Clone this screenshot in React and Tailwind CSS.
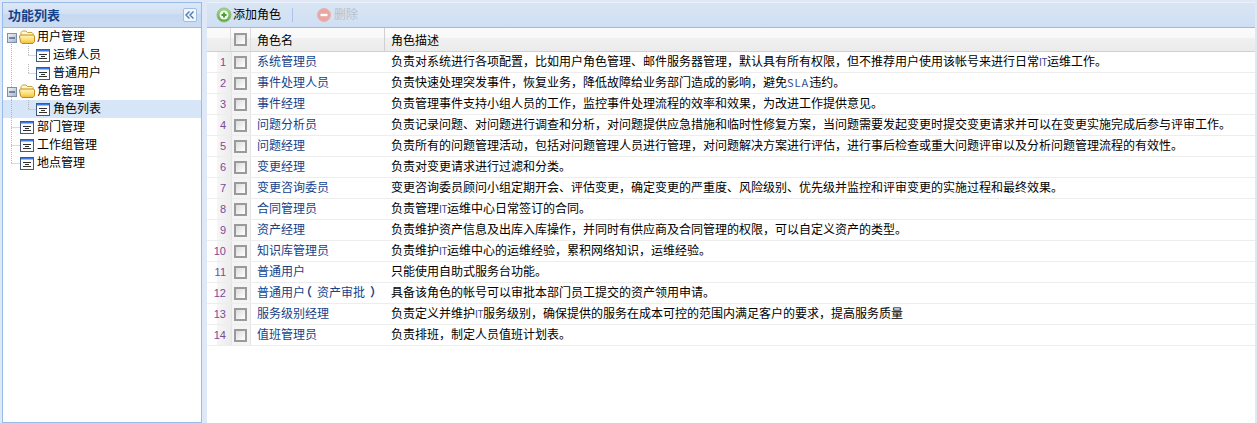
import React from 'react';

const roles = [
  ['系统管理员', '负责对系统进行各项配置，比如用户角色管理、邮件服务器管理，默认具有所有权限，但不推荐用户使用该帐号来进行日常IT运维工作。'],
  ['事件处理人员', '负责快速处理突发事件，恢复业务，降低故障给业务部门造成的影响，避免SLA违约。'],
  ['事件经理', '负责管理事件支持小组人员的工作，监控事件处理流程的效率和效果，为改进工作提供意见。'],
  ['问题分析员', '负责记录问题、对问题进行调查和分析，对问题提供应急措施和临时性修复方案，当问题需要发起变更时提交变更请求并可以在变更实施完成后参与评审工作。'],
  ['问题经理', '负责所有的问题管理活动，包括对问题管理人员进行管理，对问题解决方案进行评估，进行事后检查或重大问题评审以及分析问题管理流程的有效性。'],
  ['变更经理', '负责对变更请求进行过滤和分类。'],
  ['变更咨询委员', '变更咨询委员顾问小组定期开会、评估变更，确定变更的严重度、风险级别、优先级并监控和评审变更的实施过程和最终效果。'],
  ['合同管理员', '负责管理IT运维中心日常签订的合同。'],
  ['资产经理', '负责维护资产信息及出库入库操作，并同时有供应商及合同管理的权限，可以自定义资产的类型。'],
  ['知识库管理员', '负责维护IT运维中心的运维经验，累积网络知识，运维经验。'],
  ['普通用户', '只能使用自助式服务台功能。'],
  ['普通用户（资产审批）', '具备该角色的帐号可以审批本部门员工提交的资产领用申请。'],
  ['服务级别经理', '负责定义并维护IT服务级别，确保提供的服务在成本可控的范围内满足客户的要求，提高服务质量'],
  ['值班管理员', '负责排班，制定人员值班计划表。'],
];

function Dots({ d }) {
  return <path d={d} fill="none" stroke="#b4b4b4" strokeWidth="1" strokeDasharray="1 1" />;
}

function FolderIcon() {
  return (
    <svg width="16" height="14" viewBox="0 0 16 14" className="shrink-0">
      <defs>
        <linearGradient id="fold" x1="0" y1="0" x2="0" y2="1">
          <stop offset="0" stopColor="#fff6bd" />
          <stop offset="0.6" stopColor="#fbdd6e" />
          <stop offset="1" stopColor="#efb93a" />
        </linearGradient>
      </defs>
      <path d="M2 5V2.5L3.5 1H7L8.5 2.5H13L14 3.5V6" fill="#fff8d0" stroke="#c9a33a" />
      <path d="M1.5 5H14.5L15.5 6V11.5L14 13.5H3L1.5 12L0.5 6Z" fill="url(#fold)" stroke="#c08a1e" />
    </svg>
  );
}

function LeafIcon() {
  return (
    <svg width="14" height="13" viewBox="0 0 14 13" className="shrink-0">
      <rect x="0.5" y="0.5" width="13" height="12" fill="#fbfcfe" stroke="#45597c" />
      <rect x="1" y="1" width="12" height="1" fill="#3f78e0" />
      <rect x="1" y="2" width="12" height="1" fill="#9dbdf0" />
      <path d="M3 5.5H11M5 7.5H9M3 9.5H11" stroke="#2e2e2e" />
    </svg>
  );
}

function Expander() {
  return (
    <svg width="10" height="10" viewBox="0 0 10 10" className="absolute left-[4px] top-[5px]">
      <defs>
        <linearGradient id="exp" x1="0" y1="0" x2="1" y2="1">
          <stop offset="0" stopColor="#f4f7fb" />
          <stop offset="1" stopColor="#9fb3cf" />
        </linearGradient>
      </defs>
      <rect x="0.5" y="0.5" width="9" height="9" fill="url(#exp)" stroke="#7f8fa8" />
      <path d="M2 5H8" stroke="#1e3050" strokeWidth="1" />
    </svg>
  );
}

// one tree row, the dotted guides are drawn under the icons
function TreeRow({ label, type, child, selected, guide }) {
  return (
    <div className={`relative flex h-[18px] items-center ${selected ? 'bg-[#d6e5f8]' : ''}`}>
      <svg width="40" height="18" className="absolute left-0 top-0">
        {guide && <Dots d={guide} />}
      </svg>
      {type === 'folder' && <Expander />}
      <div className={child ? 'relative ml-[33px] flex items-center' : type === 'folder' ? 'relative ml-[16px] flex items-center' : 'relative ml-[17px] flex items-center'}>
        {type === 'folder' ? <FolderIcon /> : <LeafIcon />}
        <span className={type === 'folder' ? '-mt-[2px] ml-[2px] text-black' : '-mt-[2px] ml-[3px] text-black'}>{label}</span>
      </div>
    </div>
  );
}

function Description({ text }) {
  // latin runs are narrower in the reference's bitmap font
  return text.split(/(IT|SLA)/).map((p, i) => {
    if (p === 'IT') return <span key={i} className="text-[10px] tracking-[-0.5px] text-[#3a4a8a]">{p}</span>;
    if (p === 'SLA') return <span key={i} className="text-[11px] tracking-[1px] text-[#3a4a8a]">{p}</span>;
    return <span key={i}>{p}</span>;
  });
}

function RoleName({ name }) {
  // half width brackets with the rest of the cell as margin, the brackets sit away from the text
  return name.split(/([（）])/).map((p, i) => {
    if (p === '（') return <span key={i} className='ml-[1px] mr-[5px] font-bold [font-feature-settings:"halt"]'>{p}</span>;
    if (p === '）') return <span key={i} className='ml-[5px] mr-[1px] font-bold [font-feature-settings:"halt"]'>{p}</span>;
    return <span key={i}>{p}</span>;
  });
}

function Checkbox() {
  return (
    <div className="h-[13px] w-[13px] border-2 border-[#9a9a9a] bg-gradient-to-br from-[#dcdcdc] to-white" />
  );
}

export default function App() {
  return (
    <div
      className="flex h-[423px] w-[1257px] gap-[5px] overflow-hidden bg-[#dfe8f6] pl-[2px] pr-[2px] pt-[2px] text-[12px] leading-[18px]"
      style={{ fontFamily: '"Noto Sans CJK SC", "Liberation Sans", sans-serif' }}
    >
      {/* Left: tree */}
      <div className="flex w-[200px] shrink-0 flex-col border border-[#99bbe8] bg-white">
        <div className="flex h-[25px] shrink-0 items-center justify-between border-b border-[#99bbe8] bg-[linear-gradient(180deg,#dde8f6,#d2e0f3_45%,#c6d9f1_45%,#cbdcf2)] pl-[5px] pr-[4px]">
          <span className="text-[13px] font-bold text-[#15428b]">功能列表</span>
          <button className="flex h-[14px] w-[14px] items-center justify-center rounded-[2px] border border-[#9fbde6] bg-[#f2f7fd]">
            <svg width="10" height="8" viewBox="0 0 10 8">
              <path d="M4.5 0.5L1 4L4.5 7.5M8.5 0.5L5 4L8.5 7.5" fill="none" stroke="#4b78b5" strokeWidth="1.4" />
            </svg>
          </button>
        </div>
        <div>
          <TreeRow label="用户管理" type="folder" guide="M8.5 14V18" />
          <TreeRow label="运维人员" child guide="M8.5 0V18M25.5 0V9M25.5 9.5H33" />
          <TreeRow label="普通用户" child guide="M8.5 0V18M25.5 0V9M25.5 9.5H33" />
          <TreeRow label="角色管理" type="folder" guide="M8.5 0V5M8.5 15V18" />
          <TreeRow label="角色列表" child selected guide="M8.5 0V18M25.5 0V9M25.5 9.5H33" />
          <TreeRow label="部门管理" guide="M8.5 0V18M8.5 9.5H17" />
          <TreeRow label="工作组管理" guide="M8.5 0V18M8.5 9.5H17" />
          <TreeRow label="地点管理" guide="M8.5 0V9M8.5 9.5H17" />
        </div>
      </div>

      {/* Right: role grid */}
      <div className="flex min-w-0 flex-1 flex-col bg-white">
        <div className="flex h-[26px] shrink-0 items-center border-b border-t border-b-[#99bbe8] border-t-[#eaf1fa] bg-gradient-to-b from-[#d9e5f4] to-[#cfdff3] pl-[9px]">
          <svg width="16" height="16" viewBox="0 0 16 16">
            <defs>
              <linearGradient id="add" x1="0" y1="0" x2="0" y2="1">
                <stop offset="0" stopColor="#a5d88a" />
                <stop offset="1" stopColor="#56a63e" />
              </linearGradient>
            </defs>
            <circle cx="8" cy="8" r="7" fill="url(#add)" stroke="#8fc27a" />
            <circle cx="8" cy="8" r="4.5" fill="#f0f9ea" />
            <path d="M8 5.5V10.5M5.5 8H10.5" stroke="#4d9a38" strokeWidth="2" />
          </svg>
          <span className="-mt-[3px] ml-[1px] text-black">添加角色</span>
          <div className="ml-[11px] h-[14px] w-px bg-[#a9c4ea]" />
          <svg width="14" height="14" viewBox="0 0 14 14" className="ml-[24px]">
            <circle cx="7" cy="7" r="6.5" fill="#eca6a0" stroke="#e2b5b0" />
            <path d="M3.5 7H10.5" stroke="#fff" strokeWidth="2.4" />
          </svg>
          <span className="-mt-[3px] ml-[3px] text-[#b9c1cc]">删除</span>
        </div>

        <div className="flex h-[24px] shrink-0 border-b border-[#d0d0d0] bg-[linear-gradient(180deg,#fbfbfb,#f8f8f8_45%,#f0f0f0_45%,#ebebeb)] text-black">
          <div className="w-[24px] shrink-0 border-r border-[#dcdcdc]" />
          <div className="flex w-[20px] shrink-0 items-center border-r border-[#dcdcdc] pl-[3px]">
            <Checkbox />
          </div>
          <div className="flex w-[134px] shrink-0 items-center border-r border-[#d0d0d0] pl-[6px]">角色名</div>
          <div className="flex flex-1 items-center pl-[6px]">角色描述</div>
        </div>

        {roles.map(([name, desc], i) => (
          <div key={name} className="flex h-[21px] shrink-0 border-b border-[#ededed]">
            <div
              className="flex w-[24px] shrink-0 items-center justify-end bg-[linear-gradient(90deg,#fff_10px,#f6f6f6_10px,#ececec)] pr-[5px] text-[11px] text-[#7a4a9a]"
              style={{ fontFamily: '"Liberation Sans", sans-serif' }}
            >
              {i + 1}
            </div>
            <div className="flex w-[20px] shrink-0 items-center border-x border-[#e4e4e4] bg-[#f4f4f4] pl-[2px]">
              <Checkbox />
            </div>
            <div className="flex w-[134px] shrink-0 items-center pb-[2px] pl-[6px] text-[#15428b]">
              <span><RoleName name={name} /></span>
            </div>
            <div className="flex min-w-0 flex-1 items-center whitespace-nowrap pb-[2px] pl-[6px] text-black">
              <span><Description text={desc} /></span>
            </div>
          </div>
        ))}
      </div>
    </div>
  );
}
